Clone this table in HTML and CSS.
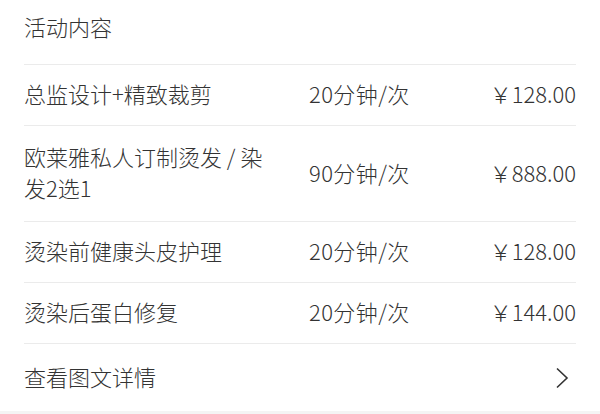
FILE: index.html
```html
<!DOCTYPE html>
<html lang="zh">
<head>
<meta charset="utf-8">
<link rel="stylesheet" href="styles.css">
</head>
<body>
<div class="card">
  <div class="card-title">活动内容</div>
  <div class="row">
    <div class="name">总监设计+精致裁剪</div>
    <div class="dur">20分钟/次</div>
    <div class="price">￥128.00</div>
  </div>
  <div class="row row-tall">
    <div class="name">欧莱雅私人订制烫发 / 染发2选1</div>
    <div class="dur">90分钟/次</div>
    <div class="price">￥888.00</div>
  </div>
  <div class="row">
    <div class="name">烫染前健康头皮护理</div>
    <div class="dur">20分钟/次</div>
    <div class="price">￥128.00</div>
  </div>
  <div class="row">
    <div class="name">烫染后蛋白修复</div>
    <div class="dur">20分钟/次</div>
    <div class="price">￥144.00</div>
  </div>
  <div class="more">
    <span>查看图文详情</span>
    <svg class="chev" width="14" height="22" viewBox="0 0 14 22"><polyline points="2,1.5 12,11 2,20.5" fill="none" stroke="#333" stroke-width="1.6"/></svg>
  </div>
</div>
</body>
</html>
```
FILE: styles.css
```css
html, body {
  margin: 0;
  padding: 0;
  background: #f4f4f4;
}
body {
  font-family: "Noto Sans CJK SC", "Noto Sans", sans-serif;
  font-size: 22px;
  font-weight: 300;
  color: #333;
}
.card {
  background: #fff;
  padding: 0 24px;
}
.card-title {
  padding: 11px 0 22px;
  line-height: 31px;
  border-bottom: 1px solid #ebebeb;
}
.row {
  display: grid;
  grid-template-columns: 285px 1fr auto;
  align-items: center;
  padding: 13px 0 16px;
  line-height: 31px;
  border-bottom: 1px solid #ebebeb;
}
.row-tall {
  padding: 15px 0 18px;
}
.name {
  padding-right: 30px;
}
.dur {
  letter-spacing: 0.4px;
}
.price {
  text-align: right;
}
.more {
  display: flex;
  justify-content: space-between;
  align-items: center;
  padding: 17px 0 19px;
  line-height: 31px;
}
.chev {
  display: block;
  margin-right: 7px;
  position: relative;
  top: 1px;
}
```
